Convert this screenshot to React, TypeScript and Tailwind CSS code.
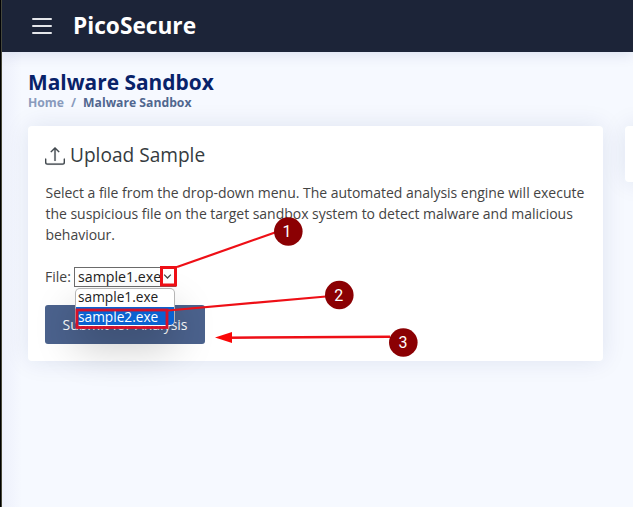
import React from "react";

const FILES = ["sample1.exe", "sample2.exe"];

function Header() {
  return (
    <header className="relative flex h-[52px] items-center bg-[#1c2438] pl-[30px] text-white shadow-[0_2px_14px_rgba(1,41,112,0.12)]">
      <button aria-label="Menu" className="flex w-[20px] flex-col gap-[5px]">
        <span className="h-[2px] rounded-full bg-[#e4e6ea]" />
        <span className="h-[2px] rounded-full bg-[#e4e6ea]" />
        <span className="h-[2px] rounded-full bg-[#e4e6ea]" />
      </button>
      <span className="ml-[21px] text-[22.7px] leading-[30px] font-bold whitespace-nowrap">PicoSecure</span>
    </header>
  );
}

function UploadIcon() {
  return (
    <svg viewBox="0 0 16 16" className="mt-px h-[20px] w-[20px] shrink-0" fill="#41484e" stroke="#41484e" strokeWidth="0.2">
      <path d="M.5 9.9a.5.5 0 0 1 .5.5v2.5a1 1 0 0 0 1 1h12a1 1 0 0 0 1-1v-2.5a.5.5 0 0 1 1 0v2.5a2 2 0 0 1-2 2H2a2 2 0 0 1-2-2v-2.5a.5.5 0 0 1 .5-.5z" />
      <path d="M7.646 1.146a.5.5 0 0 1 .708 0l3 3a.5.5 0 0 1-.708.708L8.500 2.707V11.500a.5.5 0 0 1-1 0V2.707L5.354 4.854a.5.5 0 1 1-.708-.708l3-3z" />
    </svg>
  );
}

function FilePicker() {
  return (
    <div className="flex h-[21px] items-center text-[14px]">
      <span className="w-[29px] whitespace-nowrap">File:</span>
      <div className="relative h-[20px] w-[102px] border border-[#6b6b6b] bg-white pl-[3px] text-[14.2px] leading-[18px] text-[#222]">
        {FILES[0]}
        <svg viewBox="0 0 10 6" className="absolute top-[6px] right-[3px] h-[5px] w-[9px]" fill="none" stroke="#444" strokeWidth="1.5">
          <path d="M1 .8 5 4.800 9 .8" />
        </svg>
        <ul className="absolute top-[20px] left-0 z-10 h-[38px] w-[100px] overflow-hidden rounded-[5px] border border-[#b5b5b5] border-b-transparent bg-white text-[13.7px] leading-[15px] whitespace-nowrap shadow-[0_20px_40px_rgba(0,0,0,0.22)]">
          <li className="h-[18px] pl-[2px]">{FILES[0]}</li>
          <li className="h-[20px] bg-[#0b62d0] pt-[2px] pl-[2px] text-white">{FILES[1]}</li>
        </ul>
      </div>
    </div>
  );
}

function Annotations() {
  return (
    <svg viewBox="0 0 633 507" className="pointer-events-none absolute inset-0 z-20 h-[507px] w-[633px]">
      <g fill="none" stroke="#ee0f16">
        <rect x="161.500" y="267.500" width="14" height="17.500" strokeWidth="3" />
        <rect x="77" y="310" width="90" height="17.500" strokeWidth="2.800" stroke="#d51129" />
        <path d="M177 267 275 232.500" strokeWidth="2.200" />
        <path d="M168 310.500 326 296.500" strokeWidth="2.200" />
        <path d="M228 337.700 390 336.700" strokeWidth="2.500" />
      </g>
      <path d="M215 337.500 232 332v11z" fill="#fa0707" />
      <g fill="#8b0003">
        <circle cx="288.300" cy="231.500" r="14.300" />
        <circle cx="339.300" cy="295" r="14.300" />
        <circle cx="403.300" cy="342.500" r="14.300" />
      </g>
      <g fill="#fff" fontSize="16" textAnchor="middle" fontFamily="Roboto, sans-serif">
        <text x="287" y="237">1</text>
        <text x="338.800" y="300.700">2</text>
        <text x="403" y="348">3</text>
      </g>
    </svg>
  );
}

export default function App() {
  return (
    <div className="relative flex h-[507px] w-[633px] overflow-hidden bg-[#f6f9ff] font-['Open_Sans','Noto_Sans',sans-serif]">
      <div className="w-[2px] shrink-0 border-r border-[#49493a] bg-black" />
      <div className="min-w-0 flex-1 bg-[linear-gradient(to_right,#edf0fb_0,#f6f9ff_20px)]">
        <Header />
        <main className="pl-[26px]">
          <div className="h-[74px] pt-[17px]">
            <h1 className="text-[20.9px] leading-[26px] font-bold whitespace-nowrap text-[#082269]">Malware Sandbox</h1>
            <nav className="flex h-[16px] items-center gap-[7px] text-[12.2px] leading-[16px] font-bold whitespace-nowrap text-[#899bbd]">
              <span>Home</span>
              <span>/</span>
              <span className="text-[#51678f]">Malware Sandbox</span>
            </nav>
          </div>
          <div className="flex w-[660px] items-start gap-[22px]">
            <section className="h-[235px] w-[575px] shrink-0 rounded-[4px] bg-white px-[17px] pt-[16px] text-[#444] shadow-[0_0_25px_rgba(1,41,112,0.1)]">
              <h2 className="flex h-[26px] items-center gap-[5px] text-[19.1px] leading-[26px] whitespace-nowrap text-[#353b40]">
                <UploadIcon />
                <span>Upload Sample</span>
              </h2>
              <p className="mt-[14px] pl-[0.5px] text-[14px] leading-[21px] tracking-[-0.03px] whitespace-nowrap">
                Select a file from the drop-down menu. The automated analysis engine will execute
                <br />
                the suspicious file on the target sandbox system to detect malware and malicious
                <br />
                behaviour.
              </p>
              <div className="mt-[21px]">
                <FilePicker />
              </div>
              <button className="mt-[18px] h-[39px] w-[160px] rounded-[3px] bg-[#4b628d] text-[14px] whitespace-nowrap text-white">
                Submit for Analysis
              </button>
            </section>
            <aside className="h-[56px] w-[60px] shrink-0 rounded-[4px] bg-white shadow-[0_0_25px_rgba(1,41,112,0.1)]" />
          </div>
        </main>
      </div>
      <Annotations />
    </div>
  );
}
